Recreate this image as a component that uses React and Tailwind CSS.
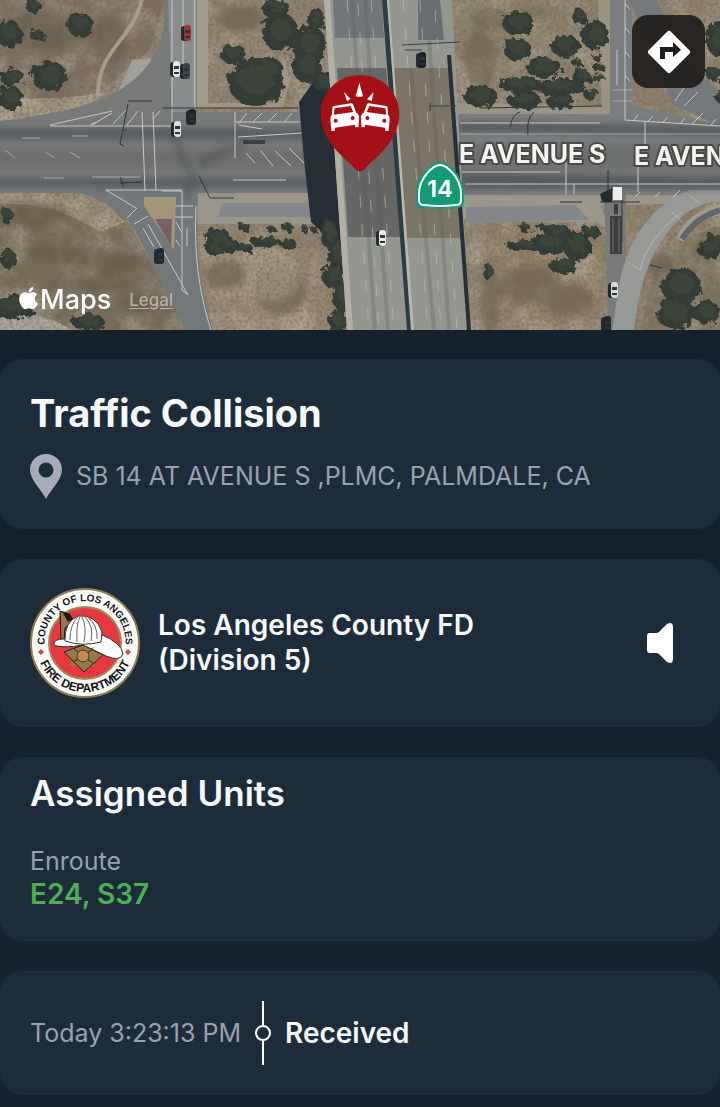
import React, { useState } from 'react';

// [cx, cy, rx, ry]
const trees = [
  [5, 30, 12, 14], [30, 3, 8, 6], [76, 21, 13, 12], [33, 31, 8, 5], [45, 72, 18, 15], [8, 73, 12, 9], [6, 94, 13, 12],
  [229, 50, 13, 10], [252, 78, 28, 24], [240, 76, 16, 16], [264, 66, 15, 13], [276, 28, 18, 19], [272, 5, 14, 10],
  [305, 40, 17, 18], [303, 62, 15, 17], [312, 16, 9, 12], [318, 78, 9, 10],
  [514, 19, 16, 12], [513, 45, 14, 11], [575, 13, 8, 7], [591, 31, 14, 15], [561, 42, 15, 11], [540, 64, 18, 10],
  [516, 81, 22, 8], [555, 83, 26, 8], [476, 92, 17, 11], [520, 96, 17, 9], [556, 97, 14, 8], [577, 72, 9, 8],
  [587, 90, 8, 6], [594, 54, 5, 4], [573, 59, 5, 4], [595, 64, 6, 4], [588, 76, 5, 4], [595, 74, 6, 3],
  [214, 235, 13, 11], [210, 245, 9, 6], [226, 242, 10, 7], [240, 244, 9, 5], [262, 238, 15, 6], [284, 240, 9, 5],
  [240, 223, 7, 4], [283, 223, 6, 4], [268, 226, 4, 3], [300, 225, 4, 3], [310, 225, 4, 3],
  [325, 230, 9, 14], [333, 250, 9, 14], [328, 272, 10, 12], [338, 292, 9, 16], [334, 318, 10, 12],
  [545, 239, 18, 11], [520, 241, 18, 6], [573, 242, 14, 15], [553, 228, 14, 7], [587, 228, 9, 7], [521, 224, 7, 4],
  [559, 262, 14, 8], [538, 223, 6, 3], [484, 268, 5, 8],
  [677, 282, 20, 18], [671, 309, 19, 16], [705, 245, 12, 10], [712, 238, 9, 8], [702, 308, 14, 12],
  [10, 303, 22, 12], [3, 212, 6, 8], [4, 255, 8, 10], [84, 318, 16, 9],
  [715, 35, 13, 18], [717, 93, 6, 6], [710, 70, 8, 7],
];

const scrub = [
  [30, 215, 40, 12], [60, 252, 34, 10], [110, 262, 30, 12], [90, 285, 40, 9], [130, 305, 22, 12], [50, 30, 40, 20],
  [110, 40, 18, 24], [240, 18, 22, 14], [480, 60, 16, 30], [490, 18, 20, 12], [540, 12, 20, 8],
  [280, 290, 26, 24], [225, 275, 20, 14], [530, 285, 34, 18], [570, 300, 24, 16], [490, 300, 9, 36], [660, 265, 16, 10],
];

// [x, y, body colour]
const vehicles = [
  [176, 69, '#e4e7e8'], [186, 71, '#39434c'], [177, 129, '#d9dde0'], [192, 117, '#1f262b'], [187, 33, '#a3352f'],
  [160, 256, '#1c2930'], [382, 238, '#eceded'], [422, 60, '#191f25'], [614, 290, '#d5dbdb'], [607, 324, '#232a2c'],
];

const hatches = [
  [96, 122, 90, 125], [112, 113, 92, 125], [126, 110, 113, 124], [138, 111, 127, 125], [160, 111, 153, 119],
  [247, 113, 238, 124], [262, 113, 253, 122], [277, 113, 268, 122], [292, 113, 285, 121],
  [246, 153, 255, 163], [261, 151, 273, 166], [275, 151, 291, 166], [289, 148, 305, 164],
  [638, 115, 633, 121], [653, 116, 647, 122], [668, 117, 662, 123], [685, 118, 680, 124], [703, 113, 692, 124], [716, 119, 711, 125],
  [640, 192, 635, 197], [660, 192, 655, 197], [680, 190, 673, 197],
  [625, 4, 630, 9], [625, 28, 630, 33], [625, 52, 630, 57], [625, 76, 630, 81],
  [684, 88, 675, 101], [698, 92, 684, 106],
  [137, 208, 127, 218], [148, 216, 134, 224], [176, 222, 181, 231], [176, 240, 180, 246],
];

const CrashCar = ({ transform }) => (
  <g transform={transform}>
    <path
      fill="#fff"
      fillRule="evenodd"
      d="M97 143Q98 139 102 138L153 130Q158 130 160 134L168 157Q176 162 177 168L176 201L166 202L165 194L105 203L104 212L94 213L91 178Q90 170 96 164ZM104 145L101 164L160 156L152 138Z"
    />
    <circle cx="107" cy="182" r="6" fill="#a50f16" />
    <circle cx="158" cy="174" r="6" fill="#a50f16" />
  </g>
);

const IncidentPin = () => (
  <svg x="320" y="74" width="80" height="98" viewBox="60 42 240 294">
    <path
      fill="#a50f16"
      d="M180 45C114 45 62 97 62 162C62 196 76 226 94 252C116 284 148 306 168 329Q180 339 192 329C212 306 244 284 266 252C284 226 298 196 298 162C298 97 246 45 180 45Z"
    />
    <path fill="#fff" d="M178 68L189 109Q178 112 167 109ZM132 96L152 117L141 123ZM221 96L215 123L201 118Z" />
    <CrashCar />
    <CrashCar transform="translate(360 0) scale(-1 1)" />
  </svg>
);

const RouteShield = () => (
  <g>
    <path
      d="M440 162C448 162 464 175 464 194V201Q464 208 457 208Q440 210 423 208Q416 208 416 201V194C416 175 432 162 440 162Z"
      fill="#139a76"
    />
    <path
      d="M440 165C446 165 461 177 461 194V200Q461 205 456 205Q440 207 424 205Q419 205 419 200V194C419 177 434 165 440 165Z"
      fill="#139a76"
      stroke="#fff"
      strokeWidth="2"
    />
    <text x="440" y="197" textAnchor="middle" fill="#fff" className="font-['Inter',sans-serif] text-[23px] font-bold">14</text>
  </g>
);

const SatelliteMap = () => (
  <svg className="block h-full w-full" viewBox="0 0 720 330" preserveAspectRatio="xMidYMid slice" role="img" aria-label="Satellite map of the incident">
    <defs>
      <filter id="grain" x="0" y="0" width="100%" height="100%">
        <feTurbulence type="fractalNoise" baseFrequency="0.3" numOctaves="3" seed="8" />
        <feColorMatrix values="0 0 0 0 0.15  0 0 0 0 0.13  0 0 0 0 0.1  1.3 0 0 0 -0.5" />
      </filter>
      <filter id="dust" x="0" y="0" width="100%" height="100%">
        <feTurbulence type="fractalNoise" baseFrequency="0.035" numOctaves="5" seed="21" />
        <feColorMatrix values="0 0 0 0 0.74  0 0 0 0 0.69  0 0 0 0 0.6  0 2 0 0 -0.8" />
      </filter>
      <filter id="rough" x="-5%" y="-5%" width="110%" height="110%">
        <feTurbulence type="fractalNoise" baseFrequency="0.16" numOctaves="3" seed="3" result="n" />
        <feDisplacementMap in="SourceGraphic" in2="n" scale="10" />
        <feGaussianBlur stdDeviation="0.7" />
      </filter>
      <filter id="soft" x="-20%" y="-20%" width="140%" height="140%">
        <feGaussianBlur stdDeviation="3" />
      </filter>
    </defs>

    {/* bare ground */}
    <rect width="720" height="330" fill="#8f806b" />
    <path d="M0 0H165L150 50L100 92L0 118Z" fill="#7f6f5f" />
    <path d="M0 98Q70 100 108 92L80 108L0 122Z" fill="#9f927e" />
    <path d="M0 192H100L130 225L190 330H0Z" fill="#786c58" />
    <path d="M0 192H95L125 222L100 232Q50 200 0 205Z" fill="#988a74" />
    <path d="M200 248H315L335 330H212Z" fill="#998871" />
    <path d="M485 225H600V330H492Z" fill="#907d65" />
    <path d="M640 330L660 250L720 225V330Z" fill="#7d715c" />
    <rect width="720" height="330" filter="url(#dust)" opacity="0.4" />
    <g fill="#5b5341" opacity="0.45" filter="url(#soft)">
      {scrub.map(([cx, cy, rx, ry], i) => <ellipse key={i} cx={cx} cy={cy} rx={rx} ry={ry} />)}
    </g>
    <ellipse cx="272" cy="275" rx="28" ry="26" fill="#aaa08e" opacity="0.6" filter="url(#soft)" />
    <path d="M0 316Q40 310 72 330H0Z" fill="#aaa69c" />
    <rect width="720" height="330" filter="url(#grain)" />

    {/* sidewalks and shoulders */}
    <path d="M142 -2C134 40 98 48 98 94" fill="none" stroke="#a39c8f" strokeWidth="4" />
    <path d="M132 60L150 58L160 70L148 90L118 92Z" fill="#a09e98" />
    <path d="M197 0H208V108H197Z" fill="#a29a8a" />
    <path d="M283 55L290 80L283 108H200V103H275Z" fill="#a09582" />
    <path d="M195 193H345V216L320 224H196Z" fill="#9a968a" />
    <path d="M222 203H310V217H218Z" fill="#85888a" />
    <path d="M462 193H720V202L600 206L612 232L596 222H466Z" fill="#9c968b" />
    <path d="M466 207L575 205L590 220L466 223Z" fill="#85878a" />
    <path d="M456 103L610 106V118H458Z" fill="#9b9588" />
    <path d="M598 0H612V110H602Z" fill="#9d9382" />

    {/* surface streets */}
    <path d="M165 0H197V112H345V193H0V121C60 114 108 104 138 76C158 56 165 40 165 0Z" fill="#787a7a" />
    <path d="M168 0H195V112H172Z" fill="#8a8d8e" />
    <path d="M100 190L176 190L198 190C196 240 198 285 213 330H186L136 232Q122 206 78 192Z" fill="#74777a" />
    <path d="M144 197H176L174 250Q160 230 144 206Z" fill="#a39679" />
    <path d="M155 219H172L171 246Z" fill="#776063" />
    <path d="M458 114H610V0H632V105L720 125V195H462Z" fill="#7b7d7e" />
    <path d="M636 0H656C674 36 690 72 720 92V126L672 104C660 62 640 32 630 0Z" fill="#74787c" />
    <path d="M604 192L626 190V240L620 330H608Z" fill="#7a7b79" />
    <path d="M720 190H690C652 204 628 240 620 280L612 330H634C640 280 650 250 680 218Q694 205 720 200Z" fill="#969996" />
    <path d="M720 204C698 210 684 220 676 238L684 242C692 226 702 218 720 215Z" fill="#a39c8d" />
    <path d="M720 210C702 216 692 224 682 239" fill="none" stroke="#60666a" strokeWidth="6" />
    <g filter="url(#soft)">
      <path d="M-10 128H345V140H-10ZM-10 178H345V188H-10Z" fill="#50555a" opacity="0.75" />
      <path d="M-10 150H345V168H-10Z" fill="#686a69" opacity="0.7" />
      <path d="M458 121L730 126V136L458 132ZM460 172L730 176V189L460 190Z" fill="#4c5156" opacity="0.75" />
      <path d="M458 144H730V170H458Z" fill="#656768" opacity="0.6" />
      <path d="M178 136Q190 170 198 176L190 200H182L188 175Q172 156 172 136ZM198 160Q220 142 245 142V150Q220 154 202 172Z" fill="#4d5257" opacity="0.45" />
    </g>

    {/* lane paint */}
    <g stroke="#c6c9c8" strokeWidth="1" fill="none">
      {hatches.map(([x1, y1, x2, y2], i) => <path key={i} d={`M${x1} ${y1}L${x2} ${y2}`} />)}
      <path d="M50 125L112 111M50 126H175M142 112L145 191M153 112L156 191M235 112V158M235 122H300M238 137L302 133M239 125L262 129" />
      <path d="M172 0V122M183 0V70M195 0V110M106 190H182M106 190L136 208M162 191H182V290L188 295L148 224M196 206C194 250 198 290 211 330" />
      <path d="M175 206H193M175 217H193M187 228V246M143 228L154 247M233 180H286" />
      <path d="M22 138H40M72 136H88M44 178H64M92 177H140M5 150L15 158M45 152L55 158M70 152L80 158" opacity="0.7" />
      <path d="M625 0V120M625 120L720 126M617 50V85M566 160V195M645 122V145M638 162V192M574 184V194M462 172H560M465 184H720M460 123H600" />
      <path d="M460 134H720M612 90H632M612 101H632M640 270Q646 240 682 212M628 262L640 270M672 212L682 222M690 196L700 204" opacity="0.6" />
    </g>
    <g stroke="#30343a" strokeWidth="1" fill="none">
      <path d="M128 104L120 144L124 146M122 130H127M128 101H152M199 176L210 198L234 198M163 108H298M120 177L124 187M142 182L120 183" />
      <path d="M528 135Q526 118 534 112M510 127Q512 114 520 112M480 108L602 106M608 170V200M600 202H640M622 200V242M560 202H582M650 265L662 268" />
    </g>
    <path d="M243 140H265V144H243Z" fill="#3a3f40" />

    {/* shadow thrown by the overpass */}
    <path d="M327 72L312 84L299 102L304 160L311 222L322 232L336 262L346 280L343 76Z" fill="#252d36" />

    {/* vegetation */}
    <g filter="url(#rough)">
      {trees.map(([cx, cy, rx, ry], i) => <ellipse key={i} cx={cx + 4} cy={cy + 4} rx={rx} ry={ry} fill="#343b34" />)}
      {trees.map(([cx, cy, rx, ry], i) => <ellipse key={i} cx={cx + 5} cy={cy + 2} rx={rx * 0.6} ry={ry * 0.6} fill="#3c453b" />)}
    </g>

    {/* overpass */}
    <path d="M324 0H452L470 330H347Z" fill="#949690" />
    <path d="M324 0H330L353 330H347Z" fill="#b2b0a5" />
    <path d="M333 0H382L384 38H335Z" fill="#737679" />
    <path d="M337 68H386L402 237H348Z" fill="#666764" />
    <path d="M390 68H452L464 238H401Z" fill="#7b7567" />
    <path d="M418 0H440L444 40H418Z" fill="#696d70" />
    <path d="M382 0H387L412 330H407Z" fill="#2f3b42" />
    <path d="M387 0H389L414 330H411Z" fill="#b7b8af" />
    <path d="M447 55H451L471 330H467Z" fill="#273039" />
    <g stroke="#bcbfbc" strokeWidth="1" fill="none" strokeDasharray="12 16" opacity="0.6">
      <path d="M347 0L369 330M358 4L379 330M371 0L394 330M403 0L428 330M420 0L441 330M435 10L457 330" />
    </g>
    <g stroke="#55595a" strokeWidth="4" fill="none" opacity="0.25">
      <path d="M352 0L375 330M365 0L388 330M411 70L434 330M429 40L449 330" />
    </g>
    <path d="M402 45L460 42M405 50H422M430 106H456M430 103V111" stroke="#3a3f40" strokeWidth="1" fill="none" />

    {vehicles.map(([x, y, color], i) => (
      <g key={i}>
        <rect x={x - 6} y={y - 7} width="8" height="15" rx="3" fill="#232a30" />
        <rect x={x - 3} y={y - 8} width="7" height="16" rx="3" fill={color} />
        <rect x={x - 2} y={y - 3} width="5" height="3" fill="#2c353c" />
        <rect x={x - 2} y={y + 3} width="5" height="2" fill="#2c353c" />
      </g>
    ))}
    <path d="M600 194L612 188V202H602Z" fill="#242a2e" />
    <rect x="613" y="187" width="9" height="13" fill="#eceded" />
    <rect x="610" y="216" width="12" height="38" fill="#3c3c3b" />
    <path d="M613 218V252M619 218V252" stroke="#75706b" />
    <path d="M614 204H618V214H614Z" fill="#3c3c3b" />

    {/* street names */}
    <g
      className="font-['Inter',sans-serif] text-[25px] font-bold"
      fill="#f3f3f1"
      stroke="#4b4744"
      strokeWidth="4"
      strokeLinejoin="round"
      paintOrder="stroke"
    >
      <text x="459" y="163">E AVENUE S</text>
      <text x="634" y="165">E AVENUE S</text>
    </g>
    <RouteShield />
    <IncidentPin />
  </svg>
);

const DirectionsIcon = () => (
  <svg className="h-11 w-11" viewBox="0 0 44 44" aria-hidden="true">
    <path d="M22 4L40 22L22 40L4 22Z" fill="#fff" stroke="#fff" strokeWidth="6" strokeLinejoin="round" />
    <path d="M13 29V17H26V12L34 20L26 27V22H18V29Z" fill="#1e1c1a" />
  </svg>
);

const AppleLogo = () => (
  <svg className="mb-1 h-[24px] w-[19px]" viewBox="0 0 384 470" fill="#fff" aria-hidden="true">
    <path d="M319 249c0-37 17-64 50-85-19-27-47-42-84-45-35-3-74 21-88 21-15 0-49-20-76-20C65 121 6 165 6 254c0 27 5 54 14 82 13 37 59 127 107 125 25-1 43-18 75-18 32 0 48 18 76 18 49-1 90-82 102-119-65-31-61-91-61-93zM262 86c28-33 25-63 24-74-24 1-52 16-68 35-18 20-28 45-26 73 26 2 50-11 70-34z" />
  </svg>
);

const MapHeader = () => (
  <header className="relative aspect-[24/11] w-full overflow-hidden">
    <SatelliteMap />
    <button type="button" aria-label="Directions" className="absolute right-[15px] top-[15px] flex h-[73px] w-[73px] items-center justify-center rounded-2xl bg-[#1e1b19]/90">
      <DirectionsIcon />
    </button>
    <div className="absolute bottom-3 left-[19px] flex items-center gap-[18px] text-white">
      <span className="flex items-center gap-0.5 text-[27px] leading-9 font-medium">
        <AppleLogo />
        Maps
      </span>
      <a href="#legal" className="text-[17px] leading-8 font-medium text-[#b4b1ab] underline underline-offset-2">Legal</a>
    </div>
  </header>
);

const Card = ({ className = '', children }) => (
  <section className={`rounded-[22px] bg-[#1c2c3b] px-[30px] ${className}`}>{children}</section>
);

const LocationIcon = () => (
  <svg className="h-[46px] w-8 shrink-0" viewBox="0 0 32 46" aria-hidden="true">
    <path
      fill="#a7adb8"
      fillRule="evenodd"
      d="M16 1C7 1 0 8 0 16.500C0 27 11 36 16 46C21 36 32 27 32 16.500C32 8 25 1 16 1ZM16 9.500A7.500 7.500 0 1 1 16 24.500A7.500 7.500 0 1 1 16 9.500Z"
    />
  </svg>
);

const DepartmentSeal = () => (
  <svg className="h-[110px] w-[110px] shrink-0" viewBox="0 0 110 110" role="img" aria-label="County of Los Angeles Fire Department seal">
    <defs>
      <path id="seal-top" d="M15 60A40.500 40.500 0 1 1 95 60" />
      <path id="seal-bottom" d="M6 55A49 49 0 0 0 104 55" />
    </defs>
    <circle cx="55" cy="55" r="54" fill="#fdfdfa" stroke="#8e7f55" strokeWidth="2" />
    <circle cx="55" cy="55" r="36" fill="#e5383f" stroke="#a08a5a" strokeWidth="2" />
    <g className="font-['Liberation_Sans',sans-serif] font-bold" fill="#161616" textAnchor="middle">
      <text className="text-[10px]"><textPath href="#seal-top" startOffset="50%">COUNTY OF LOS ANGELES</textPath></text>
      <text className="text-[12px]"><textPath href="#seal-bottom" startOffset="50%">FIRE DEPARTMENT</textPath></text>
    </g>
    <path d="M11 61L14 64L11 67L8 64ZM98 61L101 64L98 67L95 64Z" fill="#dc3c44" />
    {/* helmet */}
    <path d="M30 23L40 27L42 33L35 40L34 53L31 52Z" fill="#96794a" stroke="#1c1710" strokeWidth="1" />
    <path d="M32 23L40 26L43 31L38 34Z" fill="#1c1710" />
    <path d="M24 56Q24 51 34 51L70 46Q92 55 93 66Q90 74 76 68Q64 62 52 57Q38 60 27 58Q24 58 24 56Z" fill="#fff" stroke="#3c2c20" strokeWidth="1" />
    <path d="M35 53Q34 34 48 28Q66 26 72 44L71 54Q52 59 35 53Z" fill="#fff" stroke="#3c2c20" strokeWidth="1" />
    <path d="M40 52Q40 36 48 29M47 54Q46 36 50 29M54 54Q57 38 52 29M61 53Q64 38 55 29M67 51Q68 38 58 29" fill="none" stroke="#6f6257" strokeWidth="1" />
    {/* badge */}
    <path d="M43 58L54 63L64 59L60 66L73 67L62 71L66 79L56 76L53 84L49 77L38 78L44 71L34 64L45 65Z" fill="#96794a" />
    <path d="M34 64L53 57L73 67L54 84Z" fill="#96794a" stroke="#2a2116" strokeWidth="1" />
    <path d="M43 60L64 76M63 61L43 74" stroke="#2a2116" strokeWidth="1" />
    <circle cx="53" cy="68" r="6" fill="#bd8b4f" stroke="#5a2b1c" strokeWidth="1" />
  </svg>
);

const SpeakerIcon = () => (
  <svg className="h-[42px] w-7" viewBox="0 0 28 42" aria-hidden="true">
    <path d="M4 11H10Q12 11 13 10L21 2Q23 1 25 1Q27 2 27 5V37Q27 40 25 41Q23 41 21 40L13 32Q12 31 10 31H4Q1 31 1 28V14Q1 11 4 11Z" fill="#fff" />
  </svg>
);

export default function App() {
  const [playing, setPlaying] = useState(false);

  return (
    <div className="min-h-screen bg-[#15212d] pb-3 font-['Inter',sans-serif] text-[#f6f9fb]">
      <MapHeader />
      <main className="flex flex-col gap-[30px] pt-[29px]">
        <Card className="py-[30px]">
          <h1 className="text-[38px] leading-[48px] font-bold">Traffic Collision</h1>
          <div className="mt-4 flex items-center gap-3.5">
            <LocationIcon />
            <p className="text-[25px] leading-8 text-[#98a1ae]">SB 14 AT AVENUE S ,PLMC, PALMDALE, CA</p>
          </div>
        </Card>

        <Card className="flex items-center gap-[18px] py-[29px]">
          <DepartmentSeal />
          <h2 className="flex-1 text-[28px] leading-[35px] font-semibold">
            Los Angeles County FD
            <br />
            (Division 5)
          </h2>
          <button type="button" aria-label="Listen" aria-pressed={playing} onClick={() => setPlaying(!playing)} className="mr-4">
            <SpeakerIcon />
          </button>
        </Card>

        <Card className="pt-3.5 pb-[29px]">
          <h2 className="text-[35px] leading-[44px] font-semibold">Assigned Units</h2>
          <p className="mt-[30px] text-[25px] leading-8 text-[#98a1ae]">Enroute</p>
          <p className="text-[28px] leading-[35px] font-semibold text-[#4caf50]">E24, S37</p>
        </Card>

        <Card className="flex items-center py-[30px]">
          <time className="text-[25px] leading-8 text-[#98a1ae]">Today 3:23:13 PM</time>
          <div className="mx-3.5 flex flex-col items-center">
            <span className="h-6 w-0.5 bg-white" />
            <span className="h-4 w-4 rounded-full border-2 border-white" />
            <span className="h-6 w-0.5 bg-white" />
          </div>
          <span className="text-[28px] leading-8 font-semibold">Received</span>
        </Card>
      </main>
    </div>
  );
}
